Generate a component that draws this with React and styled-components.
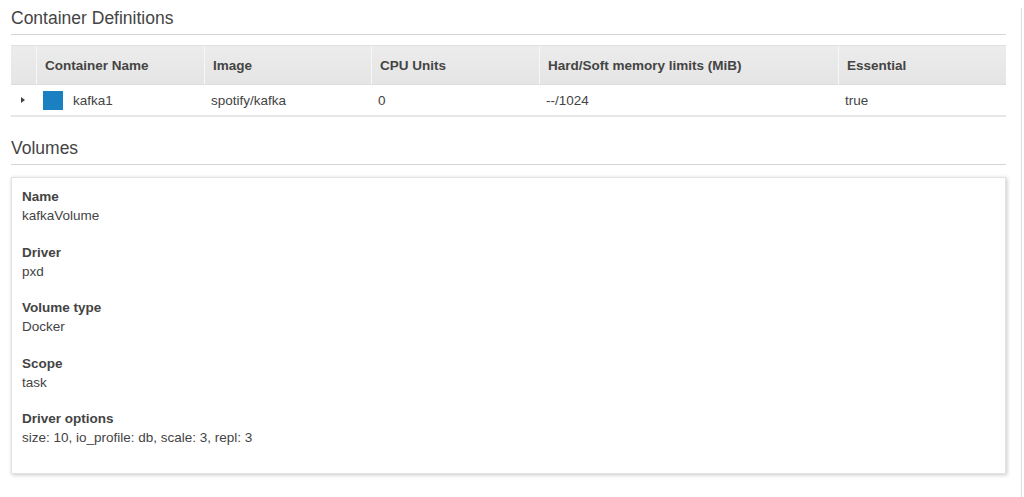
import React from "react";
import styled, { createGlobalStyle } from "styled-components";

const GlobalStyle = createGlobalStyle`
  body {
    margin: 0;
    background: #fff;
    font-family: "Liberation Sans", Arial, Helvetica, sans-serif;
    color: #444;
  }
`;

const columns = [
  { key: "name", title: "Container Name" },
  { key: "image", title: "Image" },
  { key: "cpu", title: "CPU Units" },
  { key: "memory", title: "Hard/Soft memory limits (MiB)" },
  { key: "essential", title: "Essential" },
];

const containers = [
  {
    name: "kafka1",
    color: "#1a80c2",
    image: "spotify/kafka",
    cpu: "0",
    memory: "--/1024",
    essential: "true",
  },
];

const volumeFields = [
  { label: "Name", value: "kafkaVolume" },
  { label: "Driver", value: "pxd" },
  { label: "Volume type", value: "Docker" },
  { label: "Scope", value: "task" },
  { label: "Driver options", value: "size: 10, io_profile: db, scale: 3, repl: 3" },
];

const Page = styled.div`
  width: 995px;
  min-height: 497px;
  padding: 0 15px 0 11px;
  border-right: 1px solid #dedede;
`;

const SectionTitle = styled.h2`
  margin: ${(p) => (p.$first ? "8px" : "21px")} 0 0;
  padding-bottom: 6px;
  font-size: 17.5px;
  line-height: 20px;
  font-weight: normal;
  color: #444;
  border-bottom: 1px solid #d5d5d5;
`;

const Table = styled.div`
  margin-top: 10px;
  display: grid;
  grid-template-columns: 25px 168px 167px 168px 299px 168px;
  font-size: 13.5px;
`;

const HeadCell = styled.div`
  height: 40px;
  display: flex;
  align-items: center;
  padding-left: 8px;
  box-sizing: border-box;
  font-weight: bold;
  color: #444;
  background: linear-gradient(#ececec, #e5e5e5);
  border-top: 1px solid #e0e0e0;
  border-bottom: 1px solid #dcdcdc;
  border-left: ${(p) => (p.$first ? "none" : "1px solid #f7f7f7")};
`;

const Cell = styled.div`
  height: 32px;
  display: flex;
  align-items: center;
  gap: 10px;
  padding-left: ${(p) => (p.$expand ? "10px" : "7px")};
  box-sizing: border-box;
  color: #444;
  border-bottom: 2px solid #e6e6e6;
`;

const Caret = styled.span`
  width: 0;
  height: 0;
  border-left: 4px solid #444;
  border-top: 3px solid transparent;
  border-bottom: 3px solid transparent;
`;

const Swatch = styled.span`
  width: 20px;
  height: 19px;
  background: ${(p) => p.$color};
  flex: none;
`;

const Card = styled.div`
  margin-top: 12px;
  padding: 9px 10px 26px;
  border: 1px solid #e2e2e2;
  box-shadow: 1px 1px 4px rgba(0, 0, 0, 0.22);
  font-size: 13.5px;
  line-height: 19px;
`;

const Field = styled.div`
  & + & {
    margin-top: 17.5px;
  }
`;

const Label = styled.div`
  font-weight: bold;
  color: #444;
`;

const Value = styled.div`
  color: #444;
`;

export default function App() {
  return (
    <>
      <GlobalStyle />
      <Page>
        <SectionTitle $first>Container Definitions</SectionTitle>
        <Table>
          <HeadCell $first />
          {columns.map((c) => (
            <HeadCell key={c.key}>{c.title}</HeadCell>
          ))}
          {containers.map((row) => (
            <React.Fragment key={row.name}>
              <Cell $expand>
                <Caret />
              </Cell>
              <Cell>
                <Swatch $color={row.color} />
                {row.name}
              </Cell>
              <Cell>{row.image}</Cell>
              <Cell>{row.cpu}</Cell>
              <Cell>{row.memory}</Cell>
              <Cell>{row.essential}</Cell>
            </React.Fragment>
          ))}
        </Table>

        <SectionTitle>Volumes</SectionTitle>
        <Card>
          {volumeFields.map((f) => (
            <Field key={f.label}>
              <Label>{f.label}</Label>
              <Value>{f.value}</Value>
            </Field>
          ))}
        </Card>
      </Page>
    </>
  );
}
